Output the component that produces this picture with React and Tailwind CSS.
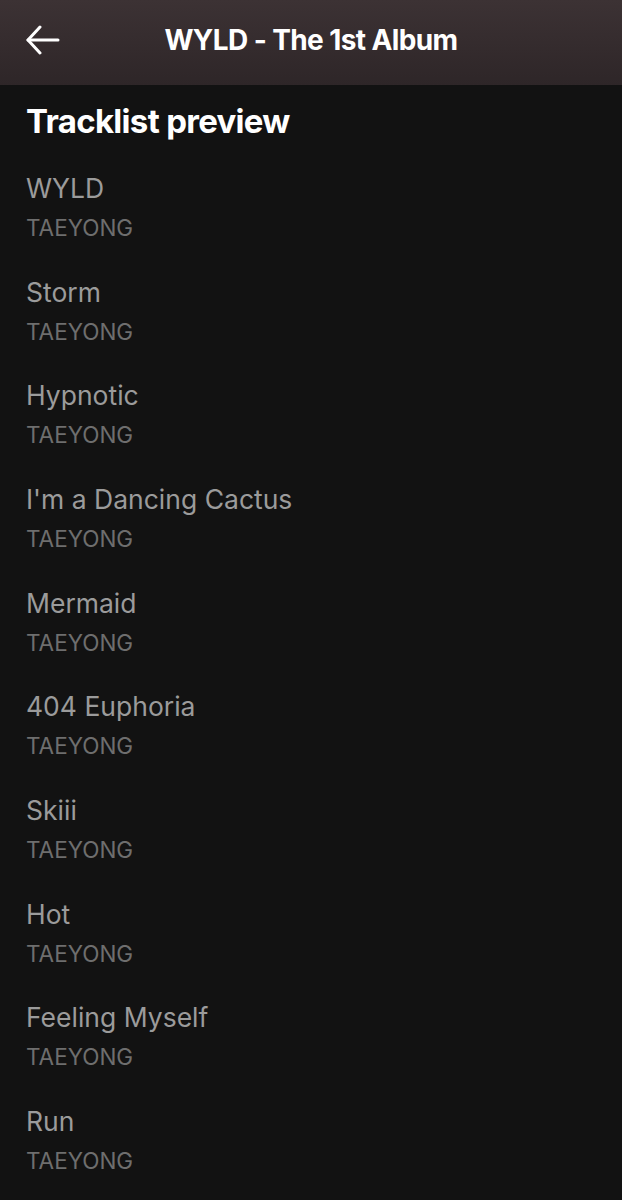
import React from "react";

const tracks = [
  "WYLD",
  "Storm",
  "Hypnotic",
  "I'm a Dancing Cactus",
  "Mermaid",
  "404 Euphoria",
  "Skiii",
  "Hot",
  "Feeling Myself",
  "Run",
];

const App = () => {
  return (
    <div
      className="w-[622px] h-[1200px] bg-[#121212] overflow-hidden"
      style={{ fontFamily: "Inter, 'Noto Sans', sans-serif" }}
    >
      {/* header */}
      <div className="relative h-[85px] bg-gradient-to-b from-[#3c3234] to-[#2e2628] flex items-center justify-center pb-[5px]">
        <button className="absolute left-[25px] top-[25px] text-white">
          <svg width="36" height="30" viewBox="0 0 36 30" fill="none" stroke="currentColor" strokeWidth="3" strokeLinecap="round" strokeLinejoin="round">
            <path d="M33 15H3" />
            <path d="M15 2L3 15L15 28" />
          </svg>
        </button>
        <h1 className="text-white font-bold text-[28px] tracking-[-0.6px]">WYLD - The 1st Album</h1>
      </div>

      <div className="px-[26px] pt-[16px]">
        <h2 className="text-white font-bold text-[33px] leading-[40px] tracking-[-0.7px]">Tracklist preview</h2>
        <div className="flex flex-col pt-[27px]">
          {tracks.map((t) => (
            <div key={t} className="h-[103.67px]">
              <div className="text-[#9b9b9b] text-[26.5px] leading-[40px]">{t}</div>
              <div className="text-[#6e6e6e] text-[22.5px] leading-[40px]">TAEYONG</div>
            </div>
          ))}
        </div>
      </div>
    </div>
  );
};

export default App;
